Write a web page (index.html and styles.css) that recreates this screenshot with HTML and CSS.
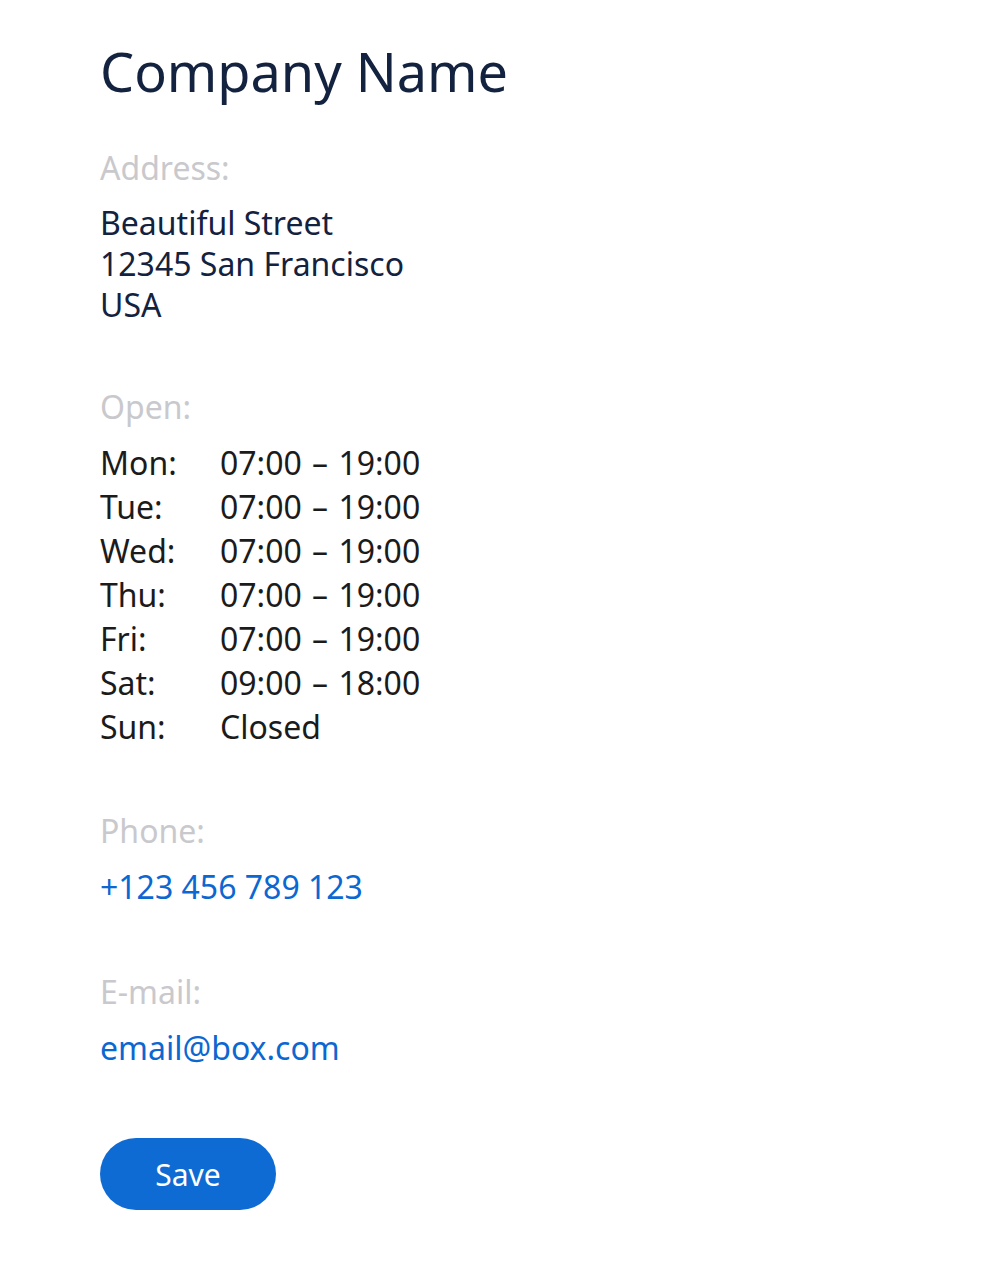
FILE: index.html
```
<!DOCTYPE html>
<html>
<head>
<meta charset="utf-8">
<link rel="stylesheet" href="styles.css">
</head>
<body>
<main class="card">
  <h1 class="title">Company Name</h1>
  <section class="block first">
    <div class="label">Address:</div>
    <div class="address">Beautiful Street<br>12345 San Francisco<br>USA</div>
  </section>
  <section class="block">
    <div class="label">Open:</div>
    <div class="hours">
      <span class="day">Mon:</span><span class="time">07:00 – 19:00</span>
      <span class="day">Tue:</span><span class="time">07:00 – 19:00</span>
      <span class="day">Wed:</span><span class="time">07:00 – 19:00</span>
      <span class="day">Thu:</span><span class="time">07:00 – 19:00</span>
      <span class="day">Fri:</span><span class="time">07:00 – 19:00</span>
      <span class="day">Sat:</span><span class="time">09:00 – 18:00</span>
      <span class="day">Sun:</span><span class="time">Closed</span>
    </div>
  </section>
  <section class="block contact">
    <div class="label">Phone:</div>
    <a class="link" href="#">+123 456 789 123</a>
  </section>
  <section class="block contact email">
    <div class="label">E-mail:</div>
    <a class="link" href="#">email@box.com</a>
  </section>
  <button class="save">Save</button>
</main>
</body>
</html>
```
FILE: styles.css
```
html, body {
  margin: 0;
  padding: 0;
  background: #ffffff;
}
body {
  font-family: "Noto Sans", "Open Sans", sans-serif;
  color: #13223f;
}
.card {
  padding: 36px 100px 40px 100px;
  display: flex;
  flex-direction: column;
  align-items: flex-start;
}
.title {
  margin: 0;
  font-size: 54px;
  font-weight: 400;
  line-height: 70px;
  color: #13223f;
}
.block {
  display: flex;
  flex-direction: column;
  align-items: flex-start;
  margin-top: 62px;
}
.block.first {
  margin-top: 42px;
}
.block.email {
  margin-top: 65px;
}
.label {
  font-size: 32px;
  line-height: 40px;
  color: #c9c9cd;
  margin-bottom: 14px;
}
.contact .label {
  margin-bottom: 16px;
}
.address {
  font-size: 32px;
  line-height: 41px;
  color: #13223f;
}
.hours {
  display: grid;
  grid-template-columns: 120px auto;
  font-size: 32px;
  line-height: 44px;
  color: #1b1b1b;
}
.time {
  word-spacing: 2px;
}
.link {
  font-size: 32px;
  line-height: 40px;
  color: #0b67d1;
  text-decoration: none;
}
.save {
  margin-top: 70px;
  width: 176px;
  height: 72px;
  border: none;
  border-radius: 36px;
  background: #0e6bd3;
  color: #ffffff;
  font-family: inherit;
  font-size: 30px;
  padding: 0;
}
```
